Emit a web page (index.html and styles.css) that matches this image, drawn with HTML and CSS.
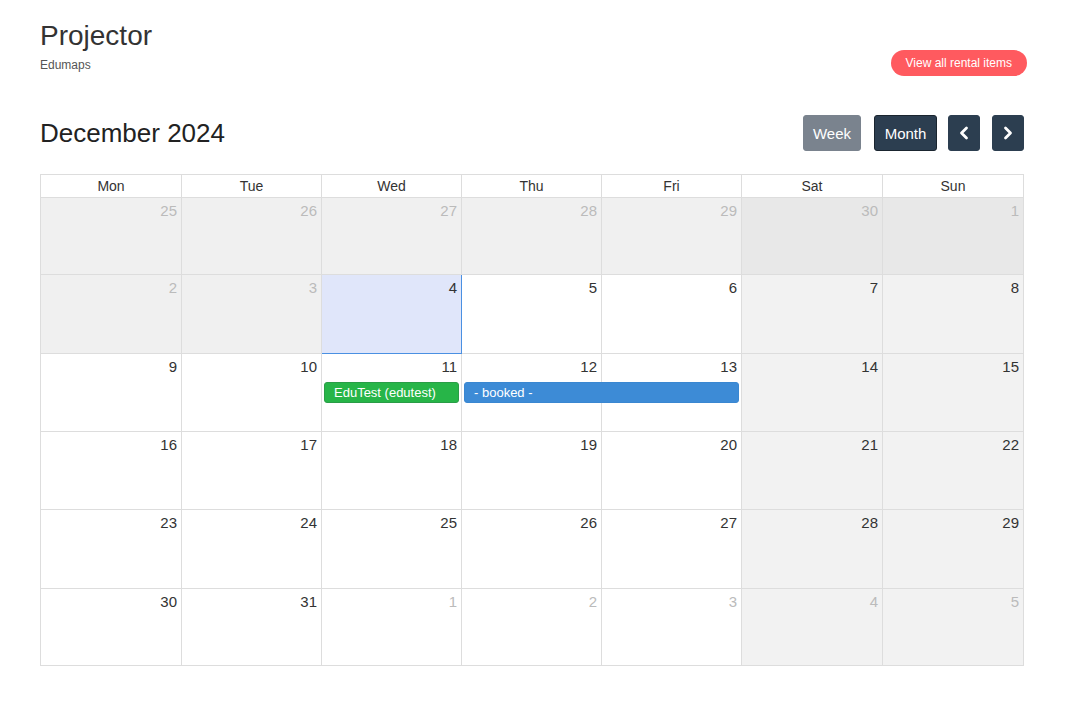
FILE: index.html
```html
<!DOCTYPE html>
<html>
<head>
<meta charset="utf-8">
<link rel="stylesheet" href="styles.css">
</head>
<body>
<div class="page">
  <header class="top">
    <div class="titles">
      <h1 class="title">Projector</h1>
      <div class="subtitle">Edumaps</div>
    </div>
    <a class="pill" href="#">View all rental items</a>
  </header>

  <div class="toolbar">
    <h2 class="month-title">December 2024</h2>
    <div class="controls">
      <button class="btn btn-week">Week</button>
      <button class="btn btn-month">Month</button>
      <button class="btn btn-icon btn-prev" aria-label="prev">
        <svg width="12" height="14" viewBox="0 0 12 14"><path d="M8.5 2 L3.5 7 L8.5 12" fill="none" stroke="#fff" stroke-width="2.8" stroke-linecap="round" stroke-linejoin="round"/></svg>
      </button>
      <button class="btn btn-icon btn-next" aria-label="next">
        <svg width="12" height="14" viewBox="0 0 12 14"><path d="M3.5 2 L8.5 7 L3.5 12" fill="none" stroke="#fff" stroke-width="2.8" stroke-linecap="round" stroke-linejoin="round"/></svg>
      </button>
    </div>
  </div>

  <div class="calendar">
    <div class="dow">
      <div class="dow-cell">Mon</div><div class="dow-cell">Tue</div><div class="dow-cell">Wed</div><div class="dow-cell">Thu</div><div class="dow-cell">Fri</div><div class="dow-cell">Sat</div><div class="dow-cell">Sun</div>
    </div>

    <div class="week w1">
      <div class="cell past other c1">25</div>
      <div class="cell past other c2">26</div>
      <div class="cell past other c3">27</div>
      <div class="cell past other c4">28</div>
      <div class="cell past other c5">29</div>
      <div class="cell past-weekend other c6">30</div>
      <div class="cell past-weekend other c7">1</div>
    </div>

    <div class="week w2">
      <div class="cell past other c1">2</div>
      <div class="cell past other c2">3</div>
      <div class="cell today c3">4</div>
      <div class="cell c4">5</div>
      <div class="cell c5">6</div>
      <div class="cell weekend c6">7</div>
      <div class="cell weekend c7">8</div>
    </div>

    <div class="week w3">
      <div class="cell c1">9</div>
      <div class="cell c2">10</div>
      <div class="cell c3">11</div>
      <div class="cell c4">12</div>
      <div class="cell c5">13</div>
      <div class="cell weekend c6">14</div>
      <div class="cell weekend c7">15</div>
      <div class="event event-green e3">EduTest (edutest)</div>
      <div class="event event-blue e4-5">- booked -</div>
    </div>

    <div class="week w4">
      <div class="cell c1">16</div>
      <div class="cell c2">17</div>
      <div class="cell c3">18</div>
      <div class="cell c4">19</div>
      <div class="cell c5">20</div>
      <div class="cell weekend c6">21</div>
      <div class="cell weekend c7">22</div>
    </div>

    <div class="week w5">
      <div class="cell c1">23</div>
      <div class="cell c2">24</div>
      <div class="cell c3">25</div>
      <div class="cell c4">26</div>
      <div class="cell c5">27</div>
      <div class="cell weekend c6">28</div>
      <div class="cell weekend c7">29</div>
    </div>

    <div class="week w6">
      <div class="cell c1">30</div>
      <div class="cell c2">31</div>
      <div class="cell other c3">1</div>
      <div class="cell other c4">2</div>
      <div class="cell other c5">3</div>
      <div class="cell weekend other c6">4</div>
      <div class="cell weekend other c7">5</div>
    </div>
  </div>
</div>
</body>
</html>
```

FILE: styles.css
```css
* { box-sizing: border-box; }
html, body { margin: 0; padding: 0; background: #fff; }
body {
  font-family: "Liberation Sans", Arial, sans-serif;
  color: #333;
}
.page {
  width: 984px;
  margin-left: 40px;
  padding-top: 20px;
}
.top {
  display: flex;
  justify-content: space-between;
  align-items: flex-start;
  height: 95px;
}
.title {
  margin: 0;
  font-size: 28px;
  font-weight: normal;
  line-height: 32px;
  color: #333;
}
.subtitle {
  font-size: 12px;
  line-height: 14px;
  margin-top: 6px;
  color: #555;
}
.pill {
  margin-top: 30px;
  margin-right: -3px;
  display: inline-block;
  height: 26px;
  line-height: 26px;
  padding: 0 15px;
  border-radius: 13px;
  background: #ff5a5f;
  color: #fff;
  font-size: 12px;
  text-decoration: none;
}
.toolbar {
  display: flex;
  justify-content: space-between;
  align-items: center;
  height: 36px;
  margin-bottom: 23px;
}
.month-title {
  margin: 0;
  font-size: 26px;
  font-weight: normal;
  color: #222;
}
.controls {
  display: flex;
}
.btn {
  height: 36px;
  border-radius: 3px;
  border: 1px solid transparent;
  color: #fff;
  font-family: "Liberation Sans", Arial, sans-serif;
  font-size: 15px;
  padding: 0 9px;
  display: flex;
  align-items: center;
  justify-content: center;
  cursor: pointer;
}
.btn-week { background: #7a838e; border-color: #7a838e; width: 58px; }
.btn-month { background: #2c3e50; border-color: #1a252f; width: 63px; margin-left: 13px; }
.btn-icon { background: #2c3e50; border-color: #2c3e50; width: 32px; padding: 0; }
.btn-prev { margin-left: 11px; }
.btn-next { margin-left: 12px; }

.calendar {
  border-left: 1px solid #ddd;
  border-top: 1px solid #ddd;
}
.dow, .week {
  display: grid;
  grid-template-columns: 141px 140px 140px 140px 140px 141px 141px;
}
.dow-cell {
  height: 23px;
  line-height: 22px;
  text-align: center;
  font-size: 14px;
  color: #333;
  border-right: 1px solid #ddd;
  border-bottom: 1px solid #ddd;
}
.week {
  grid-template-rows: 28px 22px 1fr;
  height: 78px;
}
.w1 { height: 77px; }
.w2 { height: 79px; }
.w5 { height: 79px; }
.w6 { height: 77px; }
.cell {
  grid-row: 1 / 4;
  border-right: 1px solid #ddd;
  border-bottom: 1px solid #ddd;
  text-align: right;
  padding: 4px 4px 0 0;
  font-size: 15px;
  line-height: 18px;
  color: #333;
  background: #fff;
}
.c1 { grid-column: 1; }
.c2 { grid-column: 2; }
.c3 { grid-column: 3; }
.c4 { grid-column: 4; }
.c5 { grid-column: 5; }
.c6 { grid-column: 6; }
.c7 { grid-column: 7; }
.other { color: #bbb; }
.past { background: #f0f0f0; }
.past-weekend { background: #e8e8e8; }
.weekend { background: #f2f2f2; }
.today {
  background: #e0e6fa;
  border-right-color: #4a90e2;
  border-bottom-color: #4a90e2;
  color: #333;
}
.event {
  grid-row: 2;
  height: 21px;
  margin: 0 3px 0 2px;
  border-radius: 3px;
  color: #fff;
  font-size: 13px;
  line-height: 20px;
  padding-left: 9px;
  white-space: nowrap;
  overflow: hidden;
}
.e3 { grid-column: 3; }
.e4-5 { grid-column: 4 / 6; }
.event-green { background: #27b548; border: 1px solid #2a9d47; }
.event-blue { background: #3d8bd6; border: 1px solid #3a87d1; }
```
